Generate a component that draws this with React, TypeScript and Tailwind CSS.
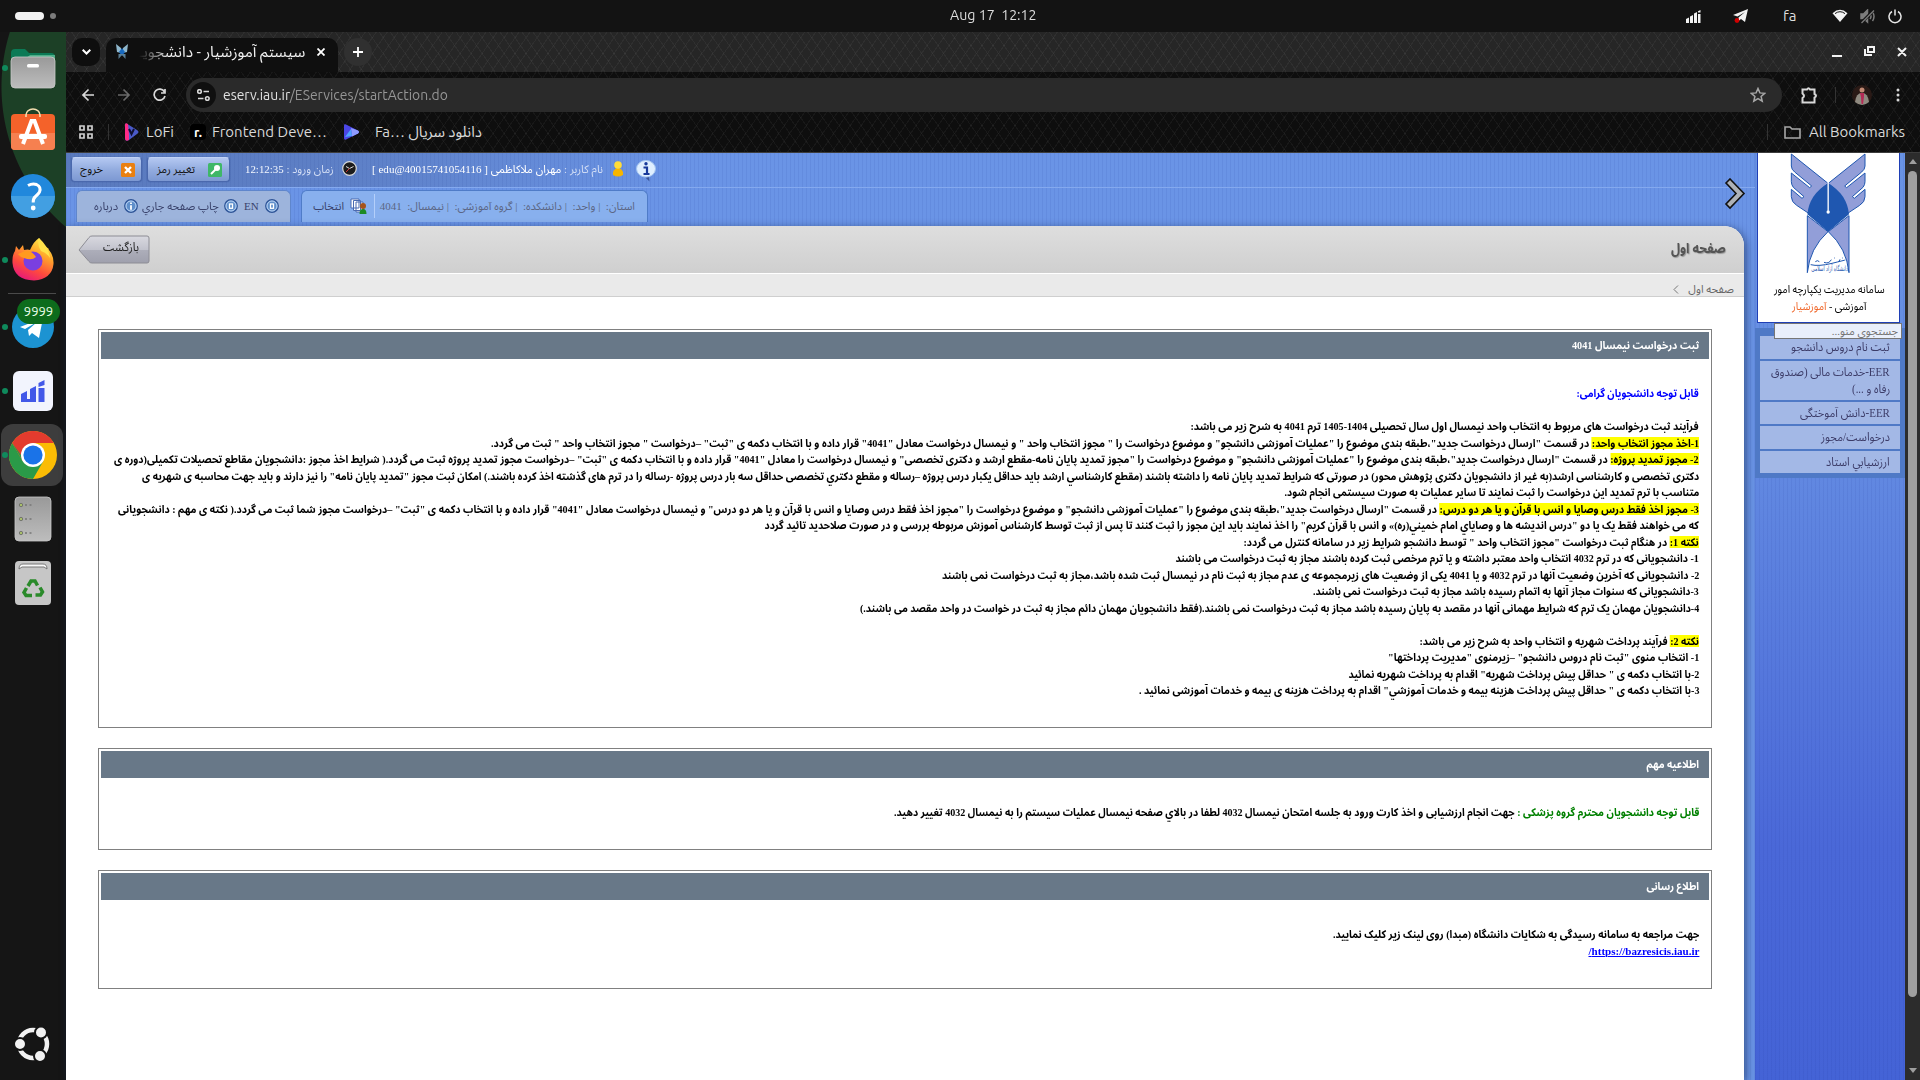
import React, { useLayoutEffect, useRef, useState } from "react";

const AR = "font-['Liberation_Serif','Noto_Sans_Arabic','DejaVu_Sans',sans-serif]";
const UI = "font-['Ubuntu','Noto_Sans','Noto_Sans_Arabic','DejaVu_Sans',sans-serif]";

/* Single line of text stretched to a given width. */
function Fit({ w, rtl = true, className = "", children }: { w: number; rtl?: boolean; className?: string; children: React.ReactNode }) {
  const ref = useRef<HTMLSpanElement>(null);
  const [k, setK] = useState(1);
  useLayoutEffect(() => {
    if (ref.current) setK(w / ref.current.offsetWidth);
  }, [w]);
  return (
    <div dir={rtl ? "rtl" : "ltr"} className={`shrink-0 whitespace-pre ${className}`} style={{ width: w }}>
      <span ref={ref} className={rtl ? "inline-block origin-right" : "inline-block origin-left"} style={{ transform: `scaleX(${k})` }}>
        {children}
      </span>
    </div>
  );
}

const Hl = ({ children }: { children: React.ReactNode }) => <span className="bg-[#ffff00]">{children}</span>;

function TopBar() {
  return (
    <div className={`flex h-8 shrink-0 items-center bg-[#131313] text-[#dedede] ${UI}`}>
      <div className="ml-[15px] h-2 w-[29px] rounded-full bg-[#f2f2f2]" />
      <div className="ml-1.5 h-1.5 w-1.5 rounded-full bg-[#7c7c7c]" />
      <div className="ml-[894px] w-[90px]">
        <Fit w={87} rtl={false} className="text-[14px] leading-[30px] pb-0.5">Aug 17  12:12</Fit>
      </div>
      <svg className="ml-[646px]" width="15" height="13" viewBox="0 0 15 13" fill="#f2f2f2">
        <path d="M0 9l3-1.500V13H0zM4 6.500L7 5v8H4zM8 3.500L11 2v11H8zM12 4h2.500v9H12zM12 1.200L14.500 0v2.600H12z" />
      </svg>
      <svg className="ml-[32px]" width="16" height="14" viewBox="0 0 16 14">
        <path d="M0 6L15 0l-3 13-4-3-2.500 2V8.500L12 3 4.500 7.500z" fill="#f2f2f2" />
        <circle cx="4" cy="11.500" r="2.400" fill="#d00000" />
      </svg>
      <Fit w={13} rtl={false} className="ml-[34px] text-[15px] leading-8">fa</Fit>
      <svg className="ml-[36px]" width="16" height="14" viewBox="0 0 16 14">
        <path d="M0.500 4.200Q8 -2.500 15.500 4.200L8 13z" fill="#f2f2f2" />
        <path d="M3 4.600Q8 0.800 13 4.600" stroke="#131313" strokeWidth="1" fill="none" />
      </svg>
      <svg className="ml-3" width="16" height="15" viewBox="0 0 16 15" fill="none" stroke="#7c7c7c" strokeWidth="1.500">
        <path d="M1 5h2.500l4-4v12l-4-3.500H1z" fill="#7c7c7c" />
        <path d="M10 5q2 2.500 0 5M12.500 3q3 4.500 0 9" />
        <path d="M1 14L14 1" stroke="#131313" strokeWidth="3" />
        <path d="M1.500 14L14 1.500" strokeWidth="1.300" />
      </svg>
      <svg className="ml-3" width="14" height="15" viewBox="0 0 14 15" fill="none" stroke="#e8e8e8" strokeWidth="1.500">
        <path d="M4 2.500a6 6 0 1 0 6 0M7 0.500v6" />
      </svg>
    </div>
  );
}

const Dot = ({ on }: { on?: boolean }) => <div className={on ? "h-1.5 w-1.5 rounded-full bg-[#0f8a5c]" : "h-1.5 w-1.5"} />;

function DockItem({ on, children }: { on?: boolean; children: React.ReactNode }) {
  return (
    <div className="flex h-16 shrink-0 items-center pl-[2px]">
      <Dot on={on} />
      <div className="relative ml-px flex w-12 items-center justify-center">{children}</div>
    </div>
  );
}

function Dock() {
  return (
    <div className="flex w-[66px] shrink-0 flex-col overflow-hidden bg-[#151515] bg-[radial-gradient(circle_at_186px_55px,#1c4026_184px,transparent_185px)]">
      <div className="h-1 shrink-0" />
      <DockItem on>
        <svg width="46" height="42" viewBox="0 0 46 42">
          <path d="M1 6q0-4 4-4h10l4 4h22q4 0 4 4v12H1z" fill="#0b7a56" />
          <path d="M1 12h14l5-4h25v8H1z" fill="#4fae88" />
          <rect x="1" y="10" width="44" height="31" rx="4" fill="url(#fg)" stroke="#c9c9c9" strokeWidth=".8" />
          <rect x="17" y="17" width="12" height="3.500" rx="1.500" fill="#fff" />
          <defs><linearGradient id="fg" x2="0" y2="1"><stop stopColor="#999" /><stop offset="1" stopColor="#bdbdbd" /></linearGradient></defs>
        </svg>
      </DockItem>
      <DockItem>
        <svg className="mb-[7px]" width="46" height="44" viewBox="0 0 46 44">
          <rect x="1" y="7" width="44" height="36" rx="4" fill="#f4622a" />
          <path d="M1 26h44v13q0 4-4 4H5q-4 0-4-4z" fill="#f68050" />
          <path d="M16 10V8a7 6 0 0 1 14 0v2" stroke="#f5deb0" strokeWidth="1.600" fill="none" />
          <path d="M13 37L21.500 14h3L33 37" stroke="#fff" strokeWidth="4" fill="none" />
          <rect x="9" y="27" width="28" height="5" rx="2" fill="#fff" />
        </svg>
      </DockItem>
      <DockItem>
        <svg width="46" height="46" viewBox="0 0 46 46">
          <circle cx="23" cy="23" r="22" fill="#2188dc" />
          <path d="M1 23h44a22 22 0 0 1-44 0z" fill="#429fe2" />
          <path d="M18 12.500q4.500-2.500 8.500-1 5 2.500 3 7.500-1 2-4 4.500-2.500 2-2.300 6" stroke="#fff" strokeWidth="3" fill="none" />
          <circle cx="23.200" cy="35" r="2.400" fill="#fff" />
        </svg>
      </DockItem>
      <DockItem on>
        <svg className="mb-0.5" width="46" height="46" viewBox="0 0 46 46">
          <defs>
            <linearGradient id="ff" x1=".8" y1="0" x2=".3" y2="1"><stop stopColor="#fff44f" /><stop offset=".35" stopColor="#ffa62b" /><stop offset=".7" stopColor="#ff4a3d" /><stop offset="1" stopColor="#e6187b" /></linearGradient>
          </defs>
          <path d="M29 2q3 5 7 9 3 1 3 3 5 6 4.500 14Q42 43 24 44.500 4 44 2.500 27 2 19 5 15l1-5 3 4 4-5 1 5q4-1 6 0 4-9 9-12z" fill="url(#ff)" />
          <circle cx="23" cy="25" r="9.500" fill="#7a3fe0" />
          <path d="M14 22q8 3 12-1-4-7-11-6l-7 3q2 3 6 4z" fill="#ff9a1f" />
          <path d="M29 2q10 9 11 20-4-6-9-7-4-5-2-13z" fill="#ffe14a" />
        </svg>
      </DockItem>
      <div className="mb-px ml-2 mt-px h-px w-12 shrink-0 bg-[#4a4a4a]" />
      <DockItem on>
        <svg width="44" height="44" viewBox="0 0 44 44">
          <circle cx="22" cy="22" r="21" fill="#1c93d2" />
          <path d="M9 22l23-9-4 20-7-5-3 3-1-6 9-8-12 7z" fill="#fff" />
        </svg>
        <div className={`absolute -top-[6px] left-[8px] flex h-[25px] w-[43px] items-center justify-center rounded-full bg-[#0d6c1c] text-[13px] text-[#eaffea] ${UI}`}>9999</div>
      </DockItem>
      <DockItem on>
        <svg width="40" height="40" viewBox="0 0 40 40" fill="#4258e8">
          <rect width="40" height="40" rx="6" fill="#f2f4fd" />
          <path d="M8 23l6-3v11H8zM14 28h4v3h-4zM17 18l6-3v16h-6zM25.500 17h6v14h-6zM25.500 12l6-3v5l-6 2z" />
        </svg>
      </DockItem>
      <div className="my-px ml-px flex h-[62px] w-[62px] shrink-0 items-center rounded-xl bg-[#3d3d3d] pl-px">
        <Dot on />
        <svg className="ml-px" width="48" height="48" viewBox="0 0 48 48">
          <circle cx="24" cy="24" r="24" fill="#fbbc04" />
          <path d="M24 24L3.200 12A24 24 0 0 1 44.800 12H24z" fill="#e33b2e" />
          <path d="M3.200 12A24 24 0 0 0 24 48L34.400 30 24 24 13.600 30z" fill="#2a9a48" />
          <path d="M3.200 12L13.600 30 24 24 16 14z" fill="#e33b2e" />
          <path d="M3.200 12L13.600 30 12 24z" fill="#2a9a48" />
          <circle cx="24" cy="24" r="12" fill="#fff" />
          <circle cx="24" cy="24" r="9.600" fill="#1a73e8" />
        </svg>
      </div>
      <DockItem>
        <svg width="38" height="46" viewBox="0 0 38 46">
          <rect x="1" y="1" width="36" height="44" rx="4" fill="url(#fg)" stroke="#c9c9c9" strokeWidth=".8" />
          {[9, 23, 37].map((y) => (
            <g key={y}>
              <circle cx="7" cy={y} r="1.700" fill="#a8bf6a" stroke="#666" strokeWidth=".8" />
              <path d={`M11 ${y}h2M15.500 ${y}h2`} stroke="#777" strokeWidth="1.600" />
            </g>
          ))}
        </svg>
      </DockItem>
      <DockItem>
        <svg width="38" height="46" viewBox="0 0 38 46">
          <rect x="1" y="1" width="36" height="44" rx="4" fill="#c6c6c6" />
          <path d="M5 9q0-5 4-5h20q4 0 4 5l-3-2H8z" fill="#f8f8f8" stroke="#777" />
          <g fill="none" stroke="#2a8a2a" strokeWidth="3.500">
            <path d="M14 26l3-5h4l2.500 4.500M26 27.500l2.500 4.500-2 3h-5M18 35.500h-6l-2-3 2.500-4.500" />
          </g>
        </svg>
      </DockItem>
      <div className="grow" />
      <svg className="mb-[17px] ml-3.5 shrink-0" width="38" height="38" viewBox="0 0 38 38">
        <circle cx="19" cy="19" r="14" fill="none" stroke="#f2f2f2" strokeWidth="4.500" />
        <g fill="#f2f2f2" stroke="#151515" strokeWidth="2">
          <circle cx="6" cy="19" r="6" /><circle cx="27" cy="7.500" r="6" /><circle cx="26" cy="31" r="6" />
        </g>
      </svg>
    </div>
  );
}

const HATCH =
  "bg-[repeating-linear-gradient(55deg,rgba(255,255,255,.045)_0_1px,transparent_1px_9px),repeating-linear-gradient(-55deg,rgba(255,255,255,.045)_0_1px,transparent_1px_9px)]";

function Browser() {
  return (
    <div className={`shrink-0 border-b border-[#3c3c3c] bg-[#0e0e0e] text-[#d8d8d8] ${UI}`}>
      <div className={`flex h-10 bg-[#262626] ${HATCH}`}>
        <div className="ml-1.5 mt-1.5 flex h-7 w-7 items-center justify-center rounded-[10px] bg-[#0e0e0e]">
          <svg width="9" height="6" viewBox="0 0 9 6" fill="none" stroke="#fff" strokeWidth="2"><path d="M.7.700L4.500 4.500 8.300.700" /></svg>
        </div>
        <div className="ml-1.5 mt-1.5 flex h-[34px] w-[232px] items-center rounded-t-[10px] bg-[#0f0f0f] pb-[6px]">
          <svg className="ml-2.5" width="12" height="16" viewBox="0 0 12 16">
            <path d="M0 0l5 4v5L1 8zM12 0L7 4v5l4-1z" fill="#8fb7cc" /><path d="M6 4l3 4-3 4-3-4z" fill="#1769c0" /><path d="M2.500 10v5L6 11l3.500 4v-5" fill="#5b7f95" />
          </svg>
          <div className="ml-[11px] [mask-image:linear-gradient(90deg,transparent,#000_30px)]">
            <Fit w={166} className="text-[15px] leading-7 text-[#f0f0f0]">سیستم آموزشیار - دانشجویـ</Fit>
          </div>
          <svg className="ml-3" width="8" height="8" viewBox="0 0 8 8" stroke="#fff" strokeWidth="1.800"><path d="M.5.500l7 7M7.500.500l-7 7" /></svg>
        </div>
        <div className="ml-[6px] mt-1.5 flex h-7 w-7 items-center justify-center rounded-full bg-[#303030]">
          <svg width="10" height="10" viewBox="0 0 10 10" stroke="#fff" strokeWidth="1.800"><path d="M5 0v10M0 5h10" /></svg>
        </div>
        <div className="grow" />
        <svg className="mt-[13px]" width="78" height="14" viewBox="0 0 78 14" fill="none" stroke="#f2f2f2" strokeWidth="2">
          <path d="M0 11h10M36 2h6v5h-6zM33 4v6h7M66 3l8 8M74 3l-8 8" />
        </svg>
        <div className="w-[10px]" />
      </div>
      <div className={HATCH}>
        <div className="flex h-[46px] items-center">
          <svg className="ml-4" width="84" height="14" viewBox="0 0 84 14" fill="none" strokeWidth="1.700">
            <path d="M12 7H1M6.500 1.500L1 7l5.500 5.500" stroke="#d8d8d8" />
            <path d="M36 7h11M41.500 1.500L47 7l-5.500 5.500" stroke="#6a6a6a" />
            <path d="M82.500 4A5.500 5.500 0 1 0 83 8M83 1v4h-4" stroke="#d8d8d8" />
          </svg>
          <div className="ml-5 flex h-[34px] w-[1596px] items-center rounded-full bg-[#2a2a2a]">
            <div className="ml-1 flex h-[26px] w-[26px] items-center justify-center rounded-full bg-[#0f0f0f]">
              <svg width="13" height="12" viewBox="0 0 13 12" fill="none" stroke="#d8d8d8" strokeWidth="1.600"><circle cx="2.500" cy="2.500" r="1.800" /><path d="M6.500 2.500H12M1 9.500h5.500" /><circle cx="10.300" cy="9.500" r="1.800" /></svg>
            </div>
            <Fit w={225} rtl={false} className="ml-[7px] text-[15px] leading-[30px] text-[#969696]"><span className="text-[#e0e0e0]">eserv.iau.ir</span>/EServices/startAction.do</Fit>
            <div className="grow" />
            <svg className="mr-4" width="16" height="16" viewBox="0 0 16 16" fill="none" stroke="#a8a8a8" strokeWidth="1.500"><path d="M8 1.500l1.900 4.400 4.800.4-3.600 3.100 1.100 4.700L8 11.600l-4.200 2.500 1.100-4.700L1.300 6.300l4.800-.4z" /></svg>
          </div>
          <svg className="ml-[19px]" width="17" height="17" viewBox="0 0 17 17" fill="none" stroke="#d8d8d8" strokeWidth="2"><path d="M1.500 2.500H6q1.500-2.500 3 0h4.500v4.500q3 1.500 0 3.500v5h-12V11q3-2 0-4.500z" /></svg>
          <div className="ml-[17px] h-4 w-px bg-[#333]" />
          <svg className="ml-4" width="20" height="20" viewBox="0 0 20 20">
            <circle cx="10" cy="10" r="10" fill="#2a1a16" /><path d="M3 17q1-9 7-9t7 9q-7 6-14 0z" fill="#8f8a80" /><circle cx="10" cy="5" r="2.500" fill="#c28a74" /><path d="M8 8h4v4l-1 7H9.500l-.5-7z" fill="#b52a55" />
          </svg>
          <svg className="ml-6" width="4" height="14" viewBox="0 0 4 14" fill="#d8d8d8"><circle cx="2" cy="2" r="1.500" /><circle cx="2" cy="7" r="1.500" /><circle cx="2" cy="12" r="1.500" /></svg>
        </div>
        <div className="flex h-[34px] items-center pb-1.5 text-[15px] leading-7">
          <svg className="ml-[13px]" width="14" height="14" viewBox="0 0 14 14" fill="none" stroke="#d0d0d0" strokeWidth="1.700"><path d="M1 1h4v4H1zM9 1h4v4H9zM1 9h4v4H1zM9 9h4v4H9z" /></svg>
          <div className="ml-[15px] h-4 w-px bg-[#333]" />
          <svg className="ml-[15px]" width="15" height="18" viewBox="0 0 15 18"><path d="M1 2Q1-1 5 2l8 5q3 2 0 4l-8 6Q1 19 1 15z" fill="#4a5ac8" /><path d="M1 2Q1-1 4 1l1 10v6q-4 2-4-2z" fill="#ff2a86" /><path d="M5 6l2.500 5L10 6" stroke="#101030" strokeWidth="2" fill="none" /></svg>
          <Fit w={28} rtl={false} className="ml-[7px]">LoFi</Fit>
          <div className="ml-4 flex h-4 w-4 items-center justify-center rounded-sm bg-black text-[13px] font-bold text-white">r.</div>
          <Fit w={115} rtl={false} className="ml-1.5">Frontend Deve…</Fit>
          <svg className="ml-[17px]" width="15" height="16" viewBox="0 0 15 16"><path d="M0 1.500Q0-.5 2 .500l12 6q2 1.500 0 3l-12 6Q0 16.500 0 14z" fill="#4b46e6" /><path d="M7 4l7 2.500q2 1.500 0 3L8 12.500z" fill="#8f9cff" /><path d="M1 13l6-8 1 7z" fill="#4fa3ff" /></svg>
          <Fit w={107} rtl={false} className="ml-4">Fa… دانلود سریال</Fit>
          <div className="grow" />
          <div className="h-4 w-px bg-[#333]" />
          <svg className="ml-4" width="17" height="13" viewBox="0 0 17 13" fill="none" stroke="#a8a8a8" strokeWidth="1.600"><path d="M1 1h5l2 2h8v9H1z" /></svg>
          <Fit w={96} rtl={false} className="ml-2 mr-[15px]">All Bookmarks</Fit>
        </div>
      </div>
    </div>
  );
}

const STRIPES = "bg-[repeating-linear-gradient(90deg,rgba(20,40,140,.08)_0_1px,transparent_1px_4px)]";

const RingIcon = ({ info }: { info?: boolean }) => (
  <svg className="mb-px" width="14" height="14" viewBox="0 0 14 14">
    <circle cx="7" cy="7" r="6.300" fill="#5f8fca" stroke="#2f5496" strokeWidth="1.200" /><circle cx="7" cy="7" r="5" fill="none" stroke="#c8defa" strokeWidth=".9" />
    {info ? <path d="M7 3.500v1.600M7 6.200v4.500" stroke="#fff" strokeWidth="1.800" /> : <rect x="5.500" y="5" width="3" height="4.300" fill="none" stroke="#fff" strokeWidth="1.300" />}
  </svg>
);

const BTN = "mt-1 flex h-[25px] items-center rounded-[4px] border border-[#4a68ad] border-t-[#c0d2f6] bg-[linear-gradient(#b4c8f2,#93acdf_50%,#7c98d2)] pb-0.5 text-[#111] shadow-[0_0_1px_#2f4a8c]";

function Header() {
  return (
    <div className={`h-[73px] shrink-0 ${AR}`}>
      <div className="flex h-[35px] border-b border-[#84a9ef] bg-[linear-gradient(90deg,rgba(70,90,140,.45)_0,rgba(70,90,140,.35)_280px,transparent_620px)] pl-[5px]">
        <div className={`${BTN} w-[71px] pl-2`}>
          <Fit w={23} className="text-[11px] leading-5">خروج</Fit>
          <svg className="ml-[18px] mt-[3px]" width="14" height="14" viewBox="0 0 14 14"><rect width="14" height="14" rx="1.500" fill="#e98012" /><path d="M4 4l6 6M10 4l-6 6" stroke="#fff" strokeWidth="2.400" /></svg>
        </div>
        <div className={`${BTN} ml-[5px] w-[83px] pl-[9px]`}>
          <Fit w={38} className="text-[11px] leading-5">تغییر رمز</Fit>
          <svg className="ml-[13px] mt-[3px]" width="14" height="14" viewBox="0 0 14 14"><rect width="14" height="14" rx="1.500" fill="#3fb768" /><circle cx="9" cy="5" r="3" fill="#fff" /><path d="M8 6l-5 5" stroke="#fff" strokeWidth="2" /></svg>
        </div>
        <Fit w={89} className="ml-[15px] text-[11px] leading-8 text-[#d4dff6]">زمان ورود : <span className="text-[#f4f8ff]">12:12:35</span></Fit>
        <svg className="ml-2 mt-2" width="15" height="15" viewBox="0 0 15 15"><circle cx="7.500" cy="7.500" r="6.800" fill="#1c1c1c" stroke="#d8d8d8" strokeWidth="1.200" /><path d="M4 5.500l3.500 2 4-2" stroke="#ddd" strokeWidth="1" fill="none" /><path d="M7.500 7.500L4 11" stroke="#c33" /></svg>
        <Fit w={231} className="ml-[15px] text-[11px] leading-8 text-[#d4dff6]">نام کاربر : <span className="text-white">مهران ملاکاظمی [ edu@40015741054116 ]</span></Fit>
        <svg className="ml-[9px] mt-2" width="12" height="16" viewBox="0 0 12 16"><path d="M1 11q2-4 5-4t5 4v3q-5 3-10 0z" fill="#f7b500" /><circle cx="6" cy="4" r="3.800" fill="#ffdc3a" /></svg>
        <svg className="ml-3 mt-[7px]" width="20" height="22" viewBox="0 0 20 22"><path d="M8 17h5l.5 4.500L9 17z" fill="#3a559a" /><ellipse cx="10" cy="8.800" rx="9.500" ry="8.300" fill="#dfefff" stroke="#a6c6f0" /><path d="M7.500 7.500h3.500v6.500M7.500 14h6" stroke="#17399a" strokeWidth="2.200" fill="none" /><circle cx="10" cy="3.800" r="1.700" fill="#17399a" /></svg>
      </div>
      <div className="flex h-[38px] items-start pl-[10px] pt-[2px] text-[11px] leading-[30px] text-[#39426b]">
        <div className="flex h-8 w-[215px] items-center rounded-t-md border border-b-0 border-[#5f86cc] bg-[#9db4dc] pb-px pl-[17px]">
          <Fit w={24}>درباره</Fit><div className="w-1.5" /><RingIcon info /><div className="w-1" />
          <Fit w={77}>چاپ صفحه جاري</Fit><div className="w-[5px]" /><RingIcon /><div className="w-1.5" />
          <Fit w={15} rtl={false}>EN</Fit><div className="w-1.5" /><RingIcon />
        </div>
        <div className="ml-[10px] flex h-8 w-[347px] items-center rounded-t-md border border-b-0 border-[#4f7cc8] bg-[#88b0ee] pb-px pl-[11px]">
          <Fit w={31}>انتخاب</Fit>
          <svg className="ml-1.5" width="17" height="17" viewBox="0 0 17 17"><path d="M1 1h8v9H1zM3.500 2.500h7v10h-7zM6 4h7v10H6z" fill="#fff" stroke="#4a6ab0" /><circle cx="13" cy="8" r="3" fill="#a5541c" /><path d="M9.500 16q0-5 3.500-5t3.500 5z" fill="#1c8a24" /></svg>
          <div className="ml-[7px] h-6 w-px bg-[#b4cffa]" />
          <Fit w={255} className="ml-[5px] text-[#5b6684]">استان:  | واحد:  | دانشکده:  | گروه آموزشی:  | نیمسال:  4041</Fit>
        </div>
      </div>
    </div>
  );
}

function Box({ h, title, tw, children }: { h: string; title: string; tw: number; children: React.ReactNode }) {
  return (
    <div className={`w-[1614px] border border-[#808080] p-[2px] ${h}`}>
      <div className="flex h-[27px] justify-end bg-[#687888] pr-2.5 text-white">
        <Fit w={tw} className="text-[11px] font-bold leading-[27px]">{title}</Fit>
      </div>
      <div className="flex flex-col items-end pr-2.5 pt-[26px] text-[11px] font-bold leading-[16.5px]">{children}</div>
    </div>
  );
}

const REQ = 'در قسمت "ارسال درخواست جدید"،طبقه بندی موضوع را "عملیات آموزشی دانشجو" و موضوع درخواست را ';

function Main() {
  return (
    <div className={`grow bg-white pl-8 pt-8 text-black ${AR}`}>
      <Box h="h-[399px]" title="ثبت درخواست نیمسال 4041" tw={127}>
        <Fit w={122.5} className="text-[#0000ff]">قابل توجه دانشجویان گرامی:</Fit>
        <div className="h-[16.5px]" />
        <Fit w={508.5}>فرآیند ثبت درخواست های مربوط به انتخاب واحد نیمسال اول سال تحصیلی 1404-1405 ترم 4041 به شرح زیر می باشد:</Fit>
        <Fit w={1208}><Hl>1-اخذ مجوز انتخاب واحد:</Hl> {REQ}" مجوز انتخاب واحد " و نیمسال درخواست معادل "4041" قرار داده و با انتخاب دکمه ی "ثبت" –درخواست " مجوز انتخاب واحد " ثبت می گردد.</Fit>
        <Fit w={1585}><Hl>2- مجوز تمدید پروژه:</Hl> {REQ}"مجوز تمدید پایان نامه-مقطع ارشد و دکتری تخصصی" و نیمسال درخواست را معادل "4041" قرار داده و با انتخاب دکمه ی "ثبت" –درخواست مجوز تمدید پروژه ثبت می گردد.( شرایط اخذ مجوز :دانشجویان مقاطع تحصیلات تکمیلی(دوره ی</Fit>
        <Fit w={1557}>دکتری تخصصی و کارشناسی ارشد(به غیر از دانشجویان دکتری پژوهش محور) در صورتی که شرایط تمدید پایان نامه را داشته باشند (مقطع کارشناسي ارشد باید حداقل یکبار درس پروژه –رساله و مقطع دکتري تخصصی حداقل سه بار درس پروژه -رساله را در ترم های گذشته اخذ کرده باشند.) امکان ثبت مجوز "تمدید پایان نامه" را نیز دارند و باید جهت محاسبه ی شهریه ی</Fit>
        <Fit w={414.5}>متناسب با ترم تمدید این درخواست را ثبت نمایند تا سایر عملیات به صورت سیستمی انجام شود.</Fit>
        <Fit w={1581}><Hl>3- مجوز اخذ فقط درس وصایا و انس با قرآن و یا هر دو درس:</Hl> {REQ}"مجوز اخذ فقط درس وصایا و انس با قرآن و یا هر دو درس" و نیمسال درخواست معادل "4041" قرار داده و با انتخاب دکمه ی "ثبت" –درخواست مجوز شما ثبت می گردد.( نکته ی مهم : دانشجویانی</Fit>
        <Fit w={934.5}>که می خواهند فقط یک یا دو "درس اندیشه ها و وصایاي امام خمیني(ره)» و انس با قرآن کریم" را اخذ نمایند باید این مجوز را ثبت کنند تا پس از ثبت توسط کارشناس آموزش مربوطه بررسی و در صورت صلاحدید تائید گردد</Fit>
        <Fit w={455.5}><Hl>نکته 1:</Hl> در هنگام ثبت درخواست "مجوز انتخاب واحد " توسط دانشجو شرایط زیر در سامانه کنترل می گردد:</Fit>
        <Fit w={523.5}>1- دانشجویانی که در ترم 4032 انتخاب واحد معتبر داشته و یا ترم مرخصی ثبت کرده باشند مجاز به ثبت درخواست می باشند</Fit>
        <Fit w={757}>2- دانشجویانی که آخرین وضعیت آنها در ترم 4032 و یا 4041 یکی از وضعیت های زیرمجموعه ی عدم مجاز به ثبت نام در نیمسال ثبت شده باشد،مجاز به ثبت درخواست نمی باشند</Fit>
        <Fit w={386}>3-دانشجویانی که سنوات مجاز آنها به اتمام رسیده باشد مجاز به ثبت درخواست نمی باشند.</Fit>
        <Fit w={839}>4-دانشجویان مهمان یک ترم که شرایط مهمانی آنها در مقصد به پایان رسیده باشد مجاز به ثبت درخواست نمی باشند.(فقط دانشجویان مهمان دائم مجاز به ثبت در خواست در واحد مقصد می باشند.)</Fit>
        <div className="h-[16.5px]" />
        <Fit w={279.5}><Hl>نکته 2:</Hl> فرآیند پرداخت شهریه و انتخاب واحد به شرح زیر می باشد:</Fit>
        <Fit w={311}>1- انتخاب منوی "ثبت نام دروس دانشجو" –زیرمنوی "مدیریت پرداختها"</Fit>
        <Fit w={350.5}>2-با انتخاب دکمه ی " حداقل پیش پرداخت شهریه" اقدام به پرداخت شهریه نمائید</Fit>
        <Fit w={561}>3-با انتخاب دکمه ی " حداقل پیش پرداخت هزینه بیمه و خدمات آموزشي" اقدام به پرداخت هزینه ی بیمه و خدمات آموزشی نمائید .</Fit>
      </Box>
      <div className="h-5" />
      <Box h="h-[102px]" title="اطلاعیه مهم" tw={52.5}>
        <Fit w={805}><span className="text-[#008000]">قابل توجه دانشجویان محترم گروه پزشکی : </span>جهت انجام ارزشیابی و اخذ کارت ورود به جلسه امتحان نیمسال 4032 لطفا در بالاي صفحه نیمسال عملیات سیستم را به نیمسال 4032 تغییر دهید.</Fit>
      </Box>
      <div className="h-5" />
      <Box h="h-[119px]" title="اطلاع رسانی" tw={52.5}>
        <Fit w={366}>جهت مراجعه به سامانه رسیدگی به شکایات دانشگاه (مبدا) روی لینک زیر کلیک نمایید.</Fit>
        <Fit w={110.5} className="text-[#0000ff]"><a className="underline">https://bazresicis.iau.ir/</a></Fit>
      </Box>
    </div>
  );
}

function Wing() {
  return (
    <g fill="#929ed8" stroke="#1f57b0" strokeWidth="3" strokeLinejoin="round">
      <path d="M458 462L568 550Q522 583 510 640L474 616Q458 606 458 590V568L490 595 496 590 464 562Q458 554 458 545V519L513 563 519 558 468 516Q458 508 458 498Z" />
      <path d="M506 647L568 695Q513 745 506 818Z" />
    </g>
  );
}

const MENU: { h: string; lines: [string, number][] }[] = [
  { h: "h-[23px]", lines: [["ثبت نام دروس دانشجو", 99]] },
  { h: "h-[39px]", lines: [["EER-خدمات مالی (صندوق", 119], ["رفاه و ...)", 38]] },
  { h: "h-[22px]", lines: [["EER-دانش آموختگی", 90]] },
  { h: "h-[23px]", lines: [["درخواست/مجوز", 69]] },
  { h: "h-[22px]", lines: [["ارزشیابي استاد", 64]] },
];

function Sidebar() {
  return (
    <div className={`relative w-[150px] shrink-0 bg-[linear-gradient(#6993e4,#648ce2_30%,#4a68d8_75%,#4463d6)] ${AR}`}>
      <div className={`flex h-full flex-col ${STRIPES}`}>
        <div className="ml-0.5 flex h-[170px] w-[143px] shrink-0 flex-col items-center border border-t-0 border-[#1f3fb5] bg-white">
          <svg className="shrink-0" width="77" height="122" viewBox="454 459 231 366">
            <Wing />
            <g transform="translate(1137 0) scale(-1 1)"><Wing /></g>
            <path d="M568.500 550Q512 583 506 643L568.500 695 631 643Q625 583 568.500 550Z" fill="#1f57b0" />
            <path d="M568.500 545V632" stroke="#fff" strokeWidth="4" /><circle cx="568.500" cy="636" r="5" fill="#fff" />
            <path d="M516 794Q540 800 580 790T620 780M530 785q6-6 12 0M556 787q14 6 22-8M600 786l4-8M610 774h2M586 774h2" fill="none" stroke="#1f57b0" strokeWidth="3" />
            <text x="573" y="814" textAnchor="middle" fontSize="22" fill="#1f57b0" textLength="110" lengthAdjust="spacingAndGlyphs" fontFamily="DejaVu Sans">دانشگاه آزاد اسلامی</text>
          </svg>
          <Fit w={111} className="mt-[6px] text-[11px] leading-[17px] text-black"><span className="relative right-[-1px]">سامانه مدیریت یکپارچه امور</span></Fit>
          <Fit w={74} className="text-[11px] leading-[17px] text-black"><span className="relative right-[-1px]">آموزشی - <span className="text-[#f0672a]">آموزشیار</span></span></Fit>
        </div>
        <div className="mt-[5px] flex shrink-0 flex-col gap-0.5 bg-[#4f79c6] pb-[5px] pl-[5px] pt-2">
          {MENU.map((m) => (
            <div key={m.lines[0][0]} className={`flex w-[140px] flex-col items-end justify-center bg-[#a3b8e6] pr-2.5 text-[12px] leading-[16.5px] text-[#3c3c68] ${m.h}`}>
              {m.lines.map(([t, w]) => (
                <Fit key={t} w={w}>{t}</Fit>
              ))}
            </div>
          ))}
        </div>
      </div>
      <div className="absolute left-[19px] top-[170px] flex h-4 w-[128px] items-center justify-end border border-[#767676] bg-[#e9effb] pr-[3px]">
        <Fit w={66} className="text-[11px] leading-[14px] text-[#757575]">جستجوی منو...</Fit>
      </div>
    </div>
  );
}

export default function App() {
  return (
    <div className="flex h-[1080px] w-[1920px] flex-col overflow-hidden bg-[#131313]">
      <TopBar />
      <div className="flex min-h-0 grow">
        <Dock />
        <div className="flex min-w-0 grow flex-col">
          <Browser />
          <div className="flex min-h-0 grow">
            <div className="w-[1689px] shrink-0 bg-[#6a94e6]">
              <div className={`relative flex h-full flex-col ${STRIPES}`}>
                <Header />
                <svg className="absolute left-[1658px] top-[25px]" width="22" height="32" viewBox="0 0 22 32"><path d="M2 5l4-4 14 14.500L6 30l-4-4 10-10.500z" fill="#aeb2b8" stroke="#111" strokeWidth="1.600" /></svg>
                <div className="flex w-[1678px] grow flex-col overflow-hidden rounded-tr-[20px] bg-white shadow-[2px_2px_8px_rgba(20,40,80,.6)]">
                  <div className={`flex h-[47px] shrink-0 items-center justify-between bg-[linear-gradient(#dedede,#cfcfcf)] pr-[18px] ${AR}`}>
                    <div className="relative ml-3 h-[29px] w-[73px]">
                      <svg width="73" height="29" viewBox="0 0 73 29">
                        <defs><linearGradient id="bk" x2="0" y2="1"><stop stopColor="#d9d9e0" /><stop offset=".5" stopColor="#c2c3cd" /><stop offset=".52" stopColor="#adaeba" /><stop offset="1" stopColor="#9fa0ad" /></linearGradient></defs>
                        <path d="M1 15L11 2.500Q12 1 14 1H69q2 0 2 2v23q0 2-2 2H14q-2 0-3-1.500z" fill="url(#bk)" stroke="#8c8c94" />
                      </svg>
                      <Fit w={36} className="absolute left-[25px] top-0 text-[12px] leading-[25px] text-[#222]">بازگشت</Fit>
                    </div>
                    <Fit w={55} className="pb-0.5 text-[14px] font-bold leading-8 text-[#555] [text-shadow:1px_1px_1px_#999]">صفحه اول</Fit>
                  </div>
                  <div className={`flex h-6 shrink-0 items-center justify-end border-b border-t border-b-[#cfcfcf] border-t-white bg-[#eaeaea] pr-2.5 pt-2 ${AR}`}>
                    <svg width="6" height="9" viewBox="0 0 6 9" fill="none" stroke="#777"><path d="M5 .5l-4 4 4 4" /></svg>
                    <Fit w={46} className="ml-[9px] text-[11px] leading-5 text-[#666]">صفحه اول</Fit>
                  </div>
                  <Main />
                </div>
              </div>
            </div>
            <Sidebar />
            <div className="flex w-[15px] shrink-0 flex-col items-center bg-[#2c2c2c] pt-[6px]">
              <div className="h-0 w-0 border-x-[4.5px] border-b-[5px] border-x-transparent border-b-[#9f9f9f]" />
              <div className="mt-[7px] h-[826px] w-[9px] shrink-0 rounded-full bg-[#9f9f9f]" />
              <div className="mt-[71px] h-0 w-0 shrink-0 border-x-[4.5px] border-t-[5px] border-x-transparent border-t-[#9f9f9f]" />
            </div>
          </div>
        </div>
      </div>
    </div>
  );
}
